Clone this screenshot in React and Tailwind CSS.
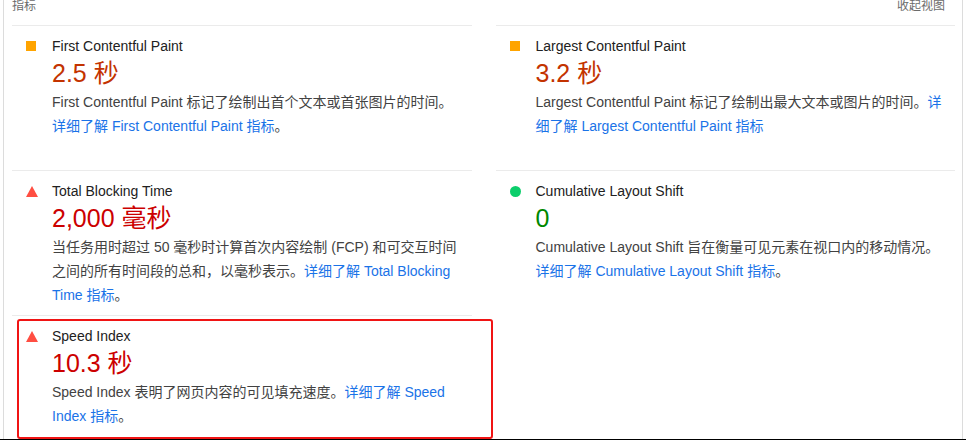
import React from "react";

const Square = () => <div className="w-[10px] h-[10px] bg-[#ffa400]" />;
const Triangle = () => (
  <svg width="12" height="11" viewBox="0 0 12 11">
    <polygon points="6,0 12,11 0,11" fill="#ff4e42" />
  </svg>
);
const Circle = () => <div className="w-[11px] h-[11px] rounded-full bg-[#0cce6b]" />;

function Metric({ icon, title, value, valueClass, desc, link, period, highlight }) {
  return (
    <div className="relative flex items-start min-h-[145px] border-t border-[#ebebeb] pt-[12px] pb-[8px]">
      <div className="w-[40px] shrink-0 pl-[14px] h-[16px] flex items-center">{icon}</div>
      <div className="flex-1 min-w-0">
        <div className="text-[14px] leading-[16px] text-[#212121]">{title}</div>
        <div className={valueClass}>{value}</div>
        <div className="mt-[3px] max-w-[410px] text-[14px] leading-[24px] text-[#424242]">
          {desc}
          <a className="text-[#1a73e8] cursor-pointer">{link}</a>
          {period}
        </div>
      </div>
      {highlight && (
        <div className="absolute left-[5px] top-[3px] w-[476px] h-[120px] border-2 border-[#f01414] rounded-[3px] pointer-events-none" />
      )}
    </div>
  );
}

export default function App() {
  return (
    <div className="w-[966px] h-[440px] overflow-hidden bg-white border-b border-black font-['Liberation_Sans','Noto_Sans_CJK_SC',sans-serif]">
      <div className="ml-[3px] w-[960px] h-full border-l border-r border-[#dcdcdc] pl-[8px] pr-[7px]">
        <div className="h-[25px] flex justify-between text-[12px] leading-[12px] text-[#6b6b6b]">
          <span>指标</span>
          <span className="pr-[10px]">收起视图</span>
        </div>
        <div className="grid grid-cols-2 gap-x-[24px]">
          <Metric
            icon={<Square />}
            title="First Contentful Paint"
            value="2.5 秒"
            valueClass="mt-[5px] text-[25px] leading-[28px] text-[#c33300]"
            desc="First Contentful Paint 标记了绘制出首个文本或首张图片的时间。"
            link="详细了解 First Contentful Paint 指标"
            period="。"
          />
          <Metric
            icon={<Square />}
            title="Largest Contentful Paint"
            value="3.2 秒"
            valueClass="mt-[5px] text-[25px] leading-[28px] text-[#c33300]"
            desc="Largest Contentful Paint 标记了绘制出最大文本或图片的时间。"
            link="详细了解 Largest Contentful Paint 指标"
            period=""
          />
          <Metric
            icon={<Triangle />}
            title="Total Blocking Time"
            value="2,000 毫秒"
            valueClass="mt-[5px] text-[25px] leading-[28px] text-[#cc0000]"
            desc="当任务用时超过 50 毫秒时计算首次内容绘制 (FCP) 和可交互时间之间的所有时间段的总和，以毫秒表示。"
            link="详细了解 Total Blocking Time 指标"
            period="。"
          />
          <Metric
            icon={<Circle />}
            title="Cumulative Layout Shift"
            value="0"
            valueClass="mt-[5px] text-[25px] leading-[28px] text-[#008800]"
            desc="Cumulative Layout Shift 旨在衡量可见元素在视口内的移动情况。"
            link="详细了解 Cumulative Layout Shift 指标"
            period="。"
          />
          <Metric
            icon={<Triangle />}
            title="Speed Index"
            value="10.3 秒"
            valueClass="mt-[5px] text-[25px] leading-[28px] text-[#cc0000]"
            desc="Speed Index 表明了网页内容的可见填充速度。"
            link="详细了解 Speed Index 指标"
            period="。"
            highlight
          />
        </div>
      </div>
    </div>
  );
}
